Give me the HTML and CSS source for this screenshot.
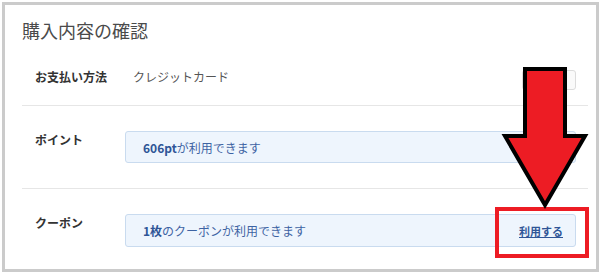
FILE: index.html
```html
<!DOCTYPE html>
<html>
<head>
   <meta charset="UTF-8">
   <title>購入内容の確認</title>
   <link rel="stylesheet" href="styles.css">
</head>
<body>

<div class="panel">
   <h2 class="panel-title">購入内容の確認</h2>

   <div class="row row-pay">
       <div class="row-label">お支払い方法</div>
       <div class="row-value">クレジットカード</div>
       <span class="btn-change">変更</span>
   </div>

   <div class="row">
       <div class="row-label">ポイント</div>
       <div class="info-box">
           <span><b>606pt</b>が利用できます</span>
       </div>
   </div>

   <div class="row row-last">
       <div class="row-label">クーポン</div>
       <div class="info-box info-coupon">
           <span><b>1枚</b>のクーポンが利用できます</span>
           <a href="javascript:;" class="use-link">利用する</a>
       </div>
   </div>
</div>

<!-- 注釈（矢印と赤枠） -->
<svg class="overlay" width="600" height="273" viewBox="0 0 600 273">
   <rect x="497" y="209" width="90" height="47" fill="none" stroke="#ed1c24" stroke-width="4"/>
   <polygon points="525,69 565,69 565,136 585,136 545,205 505,136 525,136"
            fill="#ed1c24" stroke="#000" stroke-width="4" stroke-linejoin="miter"/>
</svg>

</body>
</html>
```

FILE: styles.css
```css
* {
    margin: 0;
    padding: 0;
    box-sizing: border-box;
}

body {
    position: relative;
    width: 600px;
    height: 273px;
    overflow: hidden;
    background: #fff;
    font-family: "Noto Sans CJK JP", "Liberation Sans", sans-serif;
    color: #333;
}

.panel {
    margin: 2px;
    width: 597px;
    height: 270px;
    border: 3px solid #cbcbcb;
    padding: 12px 8px 0 17px;
    background: #fff;
}

.panel-title {
    font-size: 18px;
    line-height: 26px;
    font-weight: normal;
    color: #4a4a4a;
}

.row {
    display: flex;
    align-items: flex-start;
    padding: 25px 12px 25px 13px;
    border-bottom: 1px solid #e6e6e6;
}

.row-pay {
    padding-bottom: 15px;
}

.row-last {
    padding-top: 25px;
    border-bottom: none;
}

.row-label {
    width: 90px;
    flex-shrink: 0;
    font-size: 12px;
    line-height: 17px;
    font-weight: bold;
    color: #333;
}

.row-value {
    margin-left: 8px;
    font-size: 12px;
    line-height: 17px;
    color: #555;
}

.btn-change {
    margin-left: auto;
    margin-top: 2px;
    width: 54px;
    height: 20px;
    border: 1px solid #dcdcdc;
    border-radius: 3px;
    background: #fafafa;
    font-size: 11px;
    line-height: 18px;
    text-align: center;
    color: #555;
}

.info-box {
    flex: 1;
    display: flex;
    align-items: center;
    justify-content: space-between;
    height: 32px;
    padding: 0 12px 0 17px;
    border: 1px solid #c9dbef;
    border-radius: 3px;
    background: #eef5fd;
    font-size: 12px;
    color: #3d63a3;
}

.info-coupon {
    height: 33px;
}

.info-box b {
    color: #2f5597;
}

.use-link {
    font-size: 11px;
    font-weight: bold;
    color: #2f5597;
    text-decoration: underline;
}

.overlay {
    position: absolute;
    left: 0;
    top: 0;
    pointer-events: none;
}
```
